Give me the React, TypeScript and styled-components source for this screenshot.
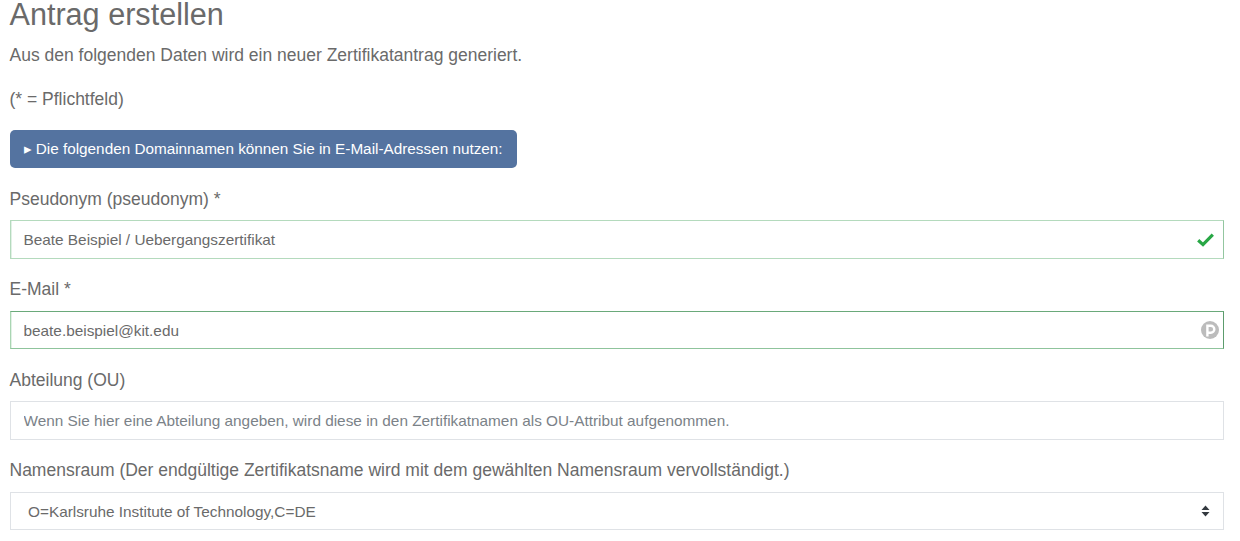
import { ReactElement } from 'react';
import styled, { createGlobalStyle, css } from 'styled-components';

const GlobalStyle = createGlobalStyle`
  body {
    margin: 0;
    background: #fff;
    color: #6a6a6a;
    font-family: "Liberation Sans", Arial, sans-serif;
    font-size: 17.5px;
    line-height: 1.5;
  }
`;

const Page = styled.div`
  padding: 0 16px 0 9.5px;
  height: 541px;
  overflow: hidden;
  box-sizing: border-box;
`;

const Title = styled.h2`
  margin: 0 0 13px;
  font-size: 30.6px;
  font-weight: 400;
  line-height: 29px;
`;

const Text = styled.p`
  margin: 0 0 18px;
  line-height: 26px;
`;

const DomainButton = styled.button`
  display: block;
  height: 38px;
  margin: 0 0 19px;
  padding: 0 14px;
  background: #5473a0;
  border: 0;
  border-radius: 5px;
  color: #fff;
  font: inherit;
  font-size: 15.3px;
`;

const Group = styled.div`
  margin-bottom: 18.7px;
`;

const Label = styled.label`
  display: block;
  margin-bottom: 8.3px;
  line-height: 25px;
`;

const Field = styled.div`
  position: relative;
`;

const borders = {
  valid: css`
    border-color: #b4dabd #93c6a0 #b4dabd #b4dabd;
    box-shadow: inset 1px 0 0 #e2f1e6;
  `,
  filled: css`
    border-color: #6aa97a #5c9c6d #8fc49c #a9d5b2;
    box-shadow: inset 1px 0 0 #e2f1e6;
  `,
  plain: css`
    border-color: #dfe2e6;
  `,
};

const Input = styled.input<{ $state: keyof typeof borders }>`
  display: block;
  width: 100%;
  height: 38.5px;
  padding: 1px 40px 0 13px;
  box-sizing: border-box;
  background: #fff;
  border: 1px solid;
  ${(p) => borders[p.$state]}
  border-radius: 0;
  color: #6a6a6a;
  font: inherit;
  font-size: 15.35px;
  outline: none;

  &::placeholder {
    color: #7b8288;
    opacity: 1;
  }
`;

const Select = styled.select`
  display: block;
  width: 100%;
  height: 38.5px;
  padding: 1px 40px 0 17.5px;
  box-sizing: border-box;
  appearance: none;
  background: #fff;
  border: 1px solid #dfe2e6;
  border-radius: 0;
  color: #6a6a6a;
  font: inherit;
  font-size: 15.35px;
`;

const FieldIcon = styled.svg<{ $right: number }>`
  position: absolute;
  top: 50%;
  right: ${(p) => p.$right}px;
  transform: translateY(-50%);
  pointer-events: none;
`;

const CheckIcon = (): ReactElement => (
  <FieldIcon $right={10} width="17" height="14" viewBox="0 0 17 14">
    <path d="M1.2 7.2 6 11.6 15.8 1.6" fill="none" stroke="#28a745" strokeWidth="3.2" />
  </FieldIcon>
);

const PasswordIcon = (): ReactElement => (
  <FieldIcon $right={5} width="18" height="18" viewBox="0 0 18 18">
    <circle cx="9" cy="9" r="9" fill="#bcbcbc" />
    <path
      d="M6.4 15.5V4.8h3.4a3.5 3.5 0 0 1 0 7H7.2"
      fill="none"
      stroke="#fff"
      strokeWidth="2.4"
    />
  </FieldIcon>
);

const SelectIcon = (): ReactElement => (
  <FieldIcon $right={14} width="9" height="12" viewBox="0 0 9 12">
    <path d="M4.5 0.5 8.5 5H0.5ZM4.5 11.5 0.5 7h8Z" fill="#343a40" />
  </FieldIcon>
);

const App = (): ReactElement => {
  return (
    <Page>
      <GlobalStyle />
      <Title>Antrag erstellen</Title>
      <Text>Aus den folgenden Daten wird ein neuer Zertifikatantrag generiert.</Text>
      <Text>(* = Pflichtfeld)</Text>
      <DomainButton type="button">
        ▸ Die folgenden Domainnamen können Sie in E-Mail-Adressen nutzen:
      </DomainButton>
      <Group>
        <Label>Pseudonym (pseudonym) *</Label>
        <Field>
          <Input $state="valid" readOnly value="Beate Beispiel / Uebergangszertifikat" />
          <CheckIcon />
        </Field>
      </Group>
      <Group>
        <Label>E-Mail *</Label>
        <Field>
          <Input $state="filled" readOnly value="beate.beispiel@kit.edu" />
          <PasswordIcon />
        </Field>
      </Group>
      <Group>
        <Label>Abteilung (OU)</Label>
        <Field>
          <Input
            $state="plain"
            readOnly
            placeholder="Wenn Sie hier eine Abteilung angeben, wird diese in den Zertifikatnamen als OU-Attribut aufgenommen."
          />
        </Field>
      </Group>
      <Group>
        <Label>
          Namensraum (Der endgültige Zertifikatsname wird mit dem gewählten Namensraum
          vervollständigt.)
        </Label>
        <Field>
          <Select defaultValue="kit">
            <option value="kit">O=Karlsruhe Institute of Technology,C=DE</option>
          </Select>
          <SelectIcon />
        </Field>
      </Group>
    </Page>
  );
};

export default App;
